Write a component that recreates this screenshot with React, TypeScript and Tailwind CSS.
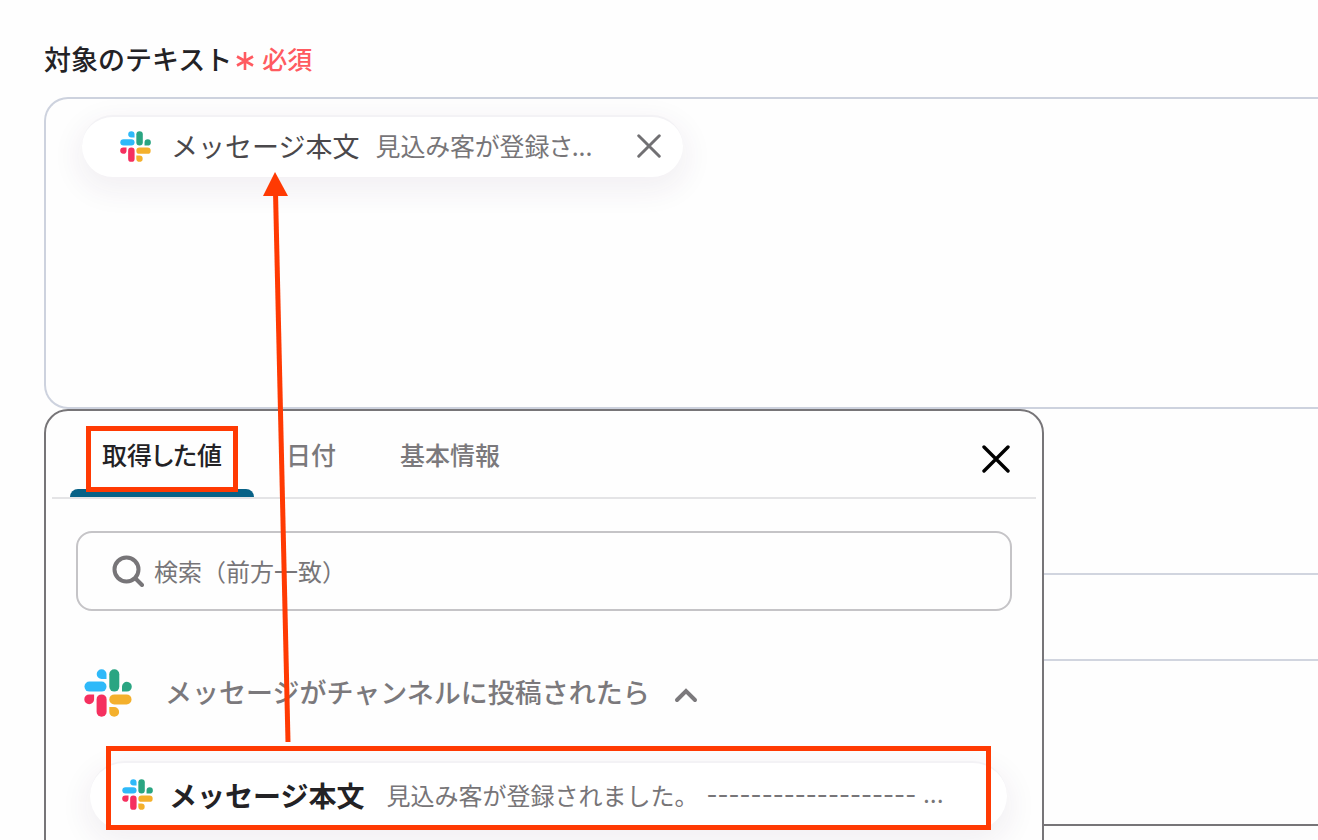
import { clsx } from "clsx";

const TABS = ["取得した値", "日付", "基本情報"];

const SlackLogo = ({ className }: { className?: string }) => (
  <svg viewBox="0 0 48 48" className={className} aria-hidden="true">
    <g fill="#2eb9f9">
      <path d="M22.5 10H17.6A4.9 4.9 0 1 1 22.5 5.1Z" />
      <rect x="0.5" y="12.6" width="22" height="10" rx="5" />
    </g>
    <g fill="#2aa582">
      <rect x="25.3" y="0.2" width="10" height="22.4" rx="5" />
      <path d="M38 22.6V17.6A4.9 4.9 0 1 1 42.9 22.6Z" />
    </g>
    <g fill="#f4b02c">
      <rect x="25.3" y="25.4" width="22.2" height="10" rx="5" />
      <path d="M25.3 38H30.2A4.9 4.9 0 1 1 25.3 42.9Z" />
    </g>
    <g fill="#f5305f">
      <path d="M10.1 25.4V30.4A4.9 4.9 0 1 1 5.2 25.4Z" />
      <rect x="12.6" y="25.4" width="10" height="22.4" rx="5" />
    </g>
  </svg>
);

const CloseIcon = ({ className }: { className?: string }) => (
  <svg viewBox="0 0 28 28" className={className} fill="none" stroke="currentColor" strokeLinecap="round" aria-hidden="true">
    <path d="M2 2L26 26M26 2L2 26" />
  </svg>
);

const RequiredMark = () => (
  <svg viewBox="0 0 18 20" className="mt-1 h-5 w-[18px]" fill="none" stroke="currentColor" strokeWidth="2.6" aria-hidden="true">
    <path d="M9 1V19M1 5.5L17 14.5M17 5.5L1 14.5" />
  </svg>
);

const SelectedValue = () => (
  <div className="flex h-[62px] w-[601px] items-center rounded-full border-t-2 border-[#f3f2f5] bg-white pr-[22px] pb-[2px] pl-[38px] shadow-[0_10px_28px_6px_rgba(60,40,80,0.06)]">
    <SlackLogo className="mr-5 h-[31px] w-[31px] shrink-0" />
    <span className="text-[27px] text-[#4a484b]">メッセージ本文</span>
    <span className="ml-4 text-[25px] text-[#777578] [font-feature-settings:'palt']">見込み客が登録さ...</span>
    <button type="button" aria-label="削除" className="ml-auto text-[#717073]">
      <CloseIcon className="h-6 w-6 stroke-[3.4]" />
    </button>
  </div>
);

const ValuePicker = () => (
  <div className="absolute top-full left-0 z-10 h-[480px] w-[1000px] rounded-t-[24px] border-2 border-[#777578] bg-[#fefefe]">
    <div className="mx-[6px] flex items-stretch border-b-2 border-[#e4e4e6] pl-[18px]">
      <div role="tablist" className="flex">
        {TABS.map((tab, i) => (
          <button
            key={tab}
            type="button"
            role="tab"
            aria-selected={i === 0}
            className={clsx(
              "relative h-[86px] px-8 pt-[2px] text-[25px] font-medium [font-feature-settings:'palt']",
              i === 0 ? "text-[#232225]" : "text-[#7b797c]",
            )}
          >
            {tab}
            {i === 0 && (
              <>
                <span className="absolute inset-x-0 bottom-0 h-2 rounded-t-lg bg-[#086287]" />
                <span className="absolute inset-x-4 top-[15px] bottom-[5px] border-5 border-[#ff3a03]" />
              </>
            )}
          </button>
        ))}
      </div>
      <button type="button" aria-label="閉じる" className="mt-[10px] mr-[26px] ml-auto text-black">
        <CloseIcon className="h-7 w-7 stroke-[3.4]" />
      </button>
    </div>

    <label className="mx-[30px] mt-8 flex h-20 items-center rounded-2xl border-2 border-[#c5c4c7] px-[34px]">
      <svg viewBox="0 0 32 32" className="h-8 w-8 shrink-0 text-[#777578]" fill="none" stroke="currentColor" strokeWidth="4" strokeLinecap="round" aria-hidden="true">
        <circle cx="14.5" cy="14.5" r="12" />
        <path d="M23.5 23.5L30 30" />
      </svg>
      <input
        type="text"
        aria-label="検索"
        placeholder="検索（前方一致）"
        className="ml-[10px] min-w-0 flex-1 bg-transparent text-2xl outline-none placeholder:text-[#777578]"
      />
    </label>

    <button type="button" aria-expanded="true" className="mt-[58px] ml-[38px] flex h-12 items-center text-[27px] font-medium text-[#7b797c]">
      <SlackLogo className="mr-[33px] h-12 w-12" />
      <span className="pb-[2px]">メッセージがチャンネルに投稿されたら</span>
      <svg viewBox="0 0 24 16" className="mt-1 ml-6 h-4 w-6" fill="none" stroke="currentColor" strokeWidth="4" strokeLinecap="round" aria-hidden="true">
        <path d="M3 13L12 4L21 13" />
      </svg>
    </button>

    <div className="relative mt-11 mr-[35px] ml-11">
      <button
        type="button"
        className="flex h-[69px] w-full items-center rounded-full border-t-2 border-[#f3f2f5] bg-white pb-1 pl-8 text-left shadow-[0_10px_28px_6px_rgba(60,40,80,0.06)]"
      >
        <SlackLogo className="mr-4 h-[31px] w-[31px] shrink-0" />
        <span className="text-[28px] font-bold text-[#232225]">メッセージ本文</span>
        <span className="ml-[22px] text-2xl text-[#777578]">見込み客が登録されました。</span>
        <span className="ml-2 font-['Inter',sans-serif] text-2xl text-[#777578]">------------------- ...</span>
      </button>
      <span className="pointer-events-none absolute -top-[15px] right-4 bottom-0 left-4 border-5 border-[#ff3a03]" />
    </div>
  </div>
);

const GuideArrow = () => (
  <svg viewBox="0 0 28 571" className="pointer-events-none absolute top-[75px] left-[219px] z-20 h-[571px] w-7" aria-hidden="true">
    <path d="M12.5 20L25 570" stroke="#ff3a03" strokeWidth="5" />
    <path d="M12 0L25 24L0 24Z" fill="#ff3a03" />
  </svg>
);

const App = () => {
  return (
    <main lang="ja" className="h-screen overflow-hidden bg-[#fefefe] pt-[39px] pl-11 font-['Noto_Sans_CJK_JP',sans-serif]">
      <h1 className="flex h-10 items-center text-[27px] font-medium text-[#232225]">
        対象のテキスト
        <span className="ml-1 flex items-center gap-2 text-[25px] text-[#ff5a60]">
          <RequiredMark />
          必須
        </span>
      </h1>

      <div className="relative mt-[18px]">
        <div className="min-h-[312px] rounded-l-[24px] border-2 border-r-0 border-[#cdd2de] px-9 py-4">
          <SelectedValue />
        </div>
        <ValuePicker />
        <GuideArrow />
      </div>

      <div className="mt-[164px] h-[88px] border-y-2 border-[#d1d5df]" />
      <div className="mt-[163px] border-t-2 border-[#777578]" />
    </main>
  );
};

export default App;
